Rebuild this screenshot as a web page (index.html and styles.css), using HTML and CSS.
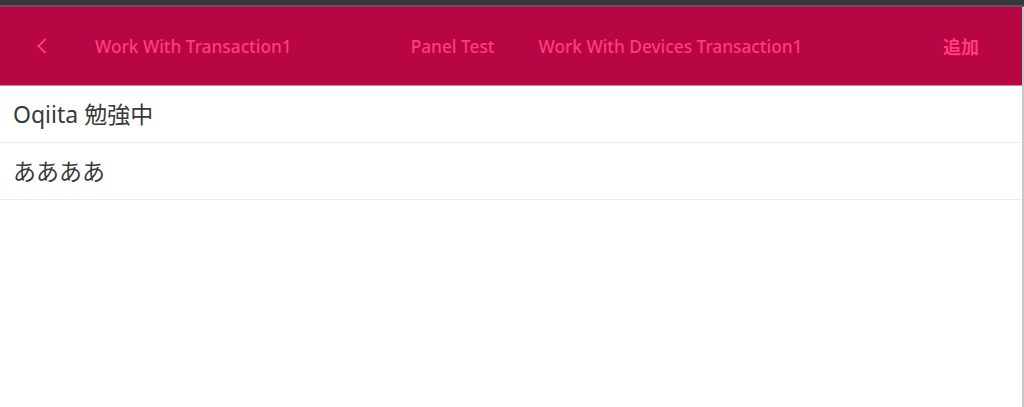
FILE: index.html
```html
<!DOCTYPE html>
<html lang="ja">
<head>
  <meta charset="UTF-8">
  <meta name="viewport" content="width=device-width, initial-scale=1.0">
  <title>Oqiita</title>
  <link rel="stylesheet" href="styles.css">
</head>
<body>
  <!-- Window strip -->
  <div class="window-bar"></div>

  <div class="page">
    <!-- Toolbar -->
    <header class="toolbar">
      <button class="back-button" aria-label="戻る">
        <svg width="12" height="16" viewBox="0 0 12 16">
          <path d="M9.5 1 L2.5 8 L9.5 15" fill="none" stroke="currentColor" stroke-width="1.8"/>
        </svg>
      </button>
      <a class="nav-link first">Work With Transaction1</a>
      <a class="nav-link panel">Panel Test</a>
      <a class="nav-link devices">Work With Devices Transaction1</a>
      <a class="nav-link add">追加</a>
    </header>

    <!-- List -->
    <ul class="item-list">
      <li class="item">Oqiita 勉強中</li>
      <li class="item">ああああ</li>
    </ul>
  </div>
</body>
</html>
```

FILE: styles.css
```css
/* General Page Styling */
body {
  margin: 0;
  background: #ffffff;
  font-family: "Noto Sans", "Noto Sans CJK JP", sans-serif;
  height: 407px;
  overflow: hidden;
}

.window-bar {
  height: 5px;
  background: #35363a;
  border-bottom: 2px solid #58595d;
}

.page {
  border-right: 2px solid #c9c9c9;
  height: 400px;
}

/* Toolbar */
.toolbar {
  display: flex;
  align-items: center;
  height: 78px;
  background: #b80644;
  border-bottom: 1px solid #f07a98;
  color: #ff3c7d;
  font-size: 17.3px;
  font-weight: 500;
}

.back-button {
  display: flex;
  align-items: center;
  padding: 0;
  margin-left: 36px;
  background: none;
  border: none;
  color: #ff3c7d;
  cursor: pointer;
}

.nav-link {
  white-space: nowrap;
  cursor: pointer;
}

.nav-link.first {
  margin-left: 47px;
}

.nav-link.panel {
  margin-left: 119px;
}

.nav-link.devices {
  margin-left: 44px;
}

.nav-link.add {
  margin-left: auto;
  margin-right: 43px;
  font-size: 18px;
  font-weight: 700;
}

/* List Styling */
.item-list {
  list-style: none;
  margin: 0;
  padding: 0;
}

.item {
  height: 56px;
  line-height: 56px;
  padding-left: 13px;
  font-size: 23px;
  color: #3a3a3a;
  border-bottom: 1px solid #ececec;
}
```
